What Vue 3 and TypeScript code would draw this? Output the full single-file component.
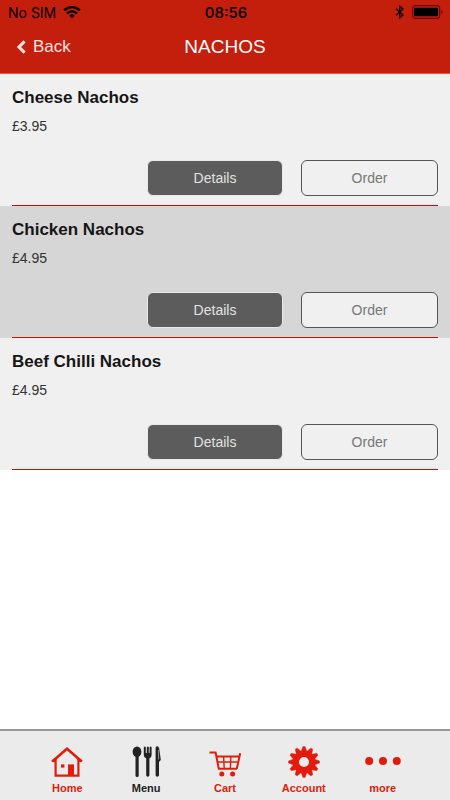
<script setup lang="ts">
interface MenuItem {
  name: string
  price: string
}

type TabIcon = 'home' | 'menu' | 'cart' | 'account' | 'more'

interface Tab {
  label: string
  icon: TabIcon
  active?: boolean
}

const items: MenuItem[] = [
  { name: 'Cheese Nachos', price: '£3.95' },
  { name: 'Chicken Nachos', price: '£4.95' },
  { name: 'Beef Chilli Nachos', price: '£4.95' },
]

const tabs: Tab[] = [
  { label: 'Home', icon: 'home' },
  { label: 'Menu', icon: 'menu', active: true },
  { label: 'Cart', icon: 'cart' },
  { label: 'Account', icon: 'account' },
  { label: 'more', icon: 'more' },
]

// Twelve-toothed gear, alternating outer and inner radius
const gearPoints: string = Array.from({ length: 48 }, (_, i) => {
  const phase = i % 4
  const step = Math.floor(i / 4)
  const radius = phase < 2 ? 15.4 : 11.4
  const offset = [-4, 4, 13, 17][phase]
  const angle = ((step * 30 + offset - 90) * Math.PI) / 180
  return `${(16 + radius * Math.cos(angle)).toFixed(2)},${(16 + radius * Math.sin(angle)).toFixed(2)}`
}).join(' ')
</script>

<template>
  <div class="screen">
    <header class="header">
      <div class="status">
        <div class="carrier">
          <span>No SIM</span>
          <svg width="18" height="14" viewBox="0 0 18 14" aria-hidden="true">
            <g fill="none" stroke="#000" stroke-width="2.4">
              <path d="M1.2 5.4C5.6 1 12.4 1 16.8 5.4" />
              <path d="M4 8.5C6.8 5.7 11.2 5.7 14 8.5" />
            </g>
            <path d="M6.2 10.4Q9 8 11.8 10.4L9 13.2Z" />
          </svg>
        </div>
        <time class="clock">08:56</time>
        <div class="power">
          <svg width="10" height="14" viewBox="0 0 10 14" aria-hidden="true">
            <path d="M1.2 3.8L8 10L4.8 12.7V1.3L8 4L1.2 10.2" fill="none" stroke="#000" stroke-width="1.3" />
          </svg>
          <svg width="32" height="14" viewBox="0 0 32 14" aria-hidden="true">
            <rect x="0.7" y="0.7" width="27" height="12.6" rx="2.5" fill="none" stroke="#680b05" stroke-width="1.2" />
            <rect x="2" y="2.8" width="24" height="8.4" rx="0.6" />
            <path d="M29.5 4.8Q32 7 29.5 9.2Z" fill="#680b05" />
          </svg>
        </div>
      </div>
      <nav class="titlebar">
        <a class="back" href="#">
          <svg width="10" height="14" viewBox="0 0 10 14" aria-hidden="true">
            <path d="M8.6 1.4L3 7L8.6 12.6" fill="none" stroke="currentColor" stroke-width="3" />
          </svg>
          <span>Back</span>
        </a>
        <h1 class="title">NACHOS</h1>
      </nav>
    </header>

    <main class="content">
      <ul class="list">
        <li v-for="item in items" :key="item.name" class="row">
          <div class="row-body">
            <h2 class="name">{{ item.name }}</h2>
            <p class="price">{{ item.price }}</p>
            <div class="actions">
              <button type="button" class="btn details">Details</button>
              <button type="button" class="btn order">Order</button>
            </div>
          </div>
        </li>
      </ul>
    </main>

    <nav class="tabbar">
      <a v-for="tab in tabs" :key="tab.label" href="#" class="tab" :class="{ active: tab.active }">
        <svg width="32" height="32" viewBox="0 0 32 32" aria-hidden="true">
          <template v-if="tab.icon === 'home'">
            <path d="M1.3 15.4L16 2.8L30.7 15.4" fill="none" stroke="currentColor" stroke-width="2.6" />
            <path d="M4.6 13V29.6H27.4V13" fill="none" stroke="currentColor" stroke-width="2.2" />
            <path d="M0.6 14.4L4.4 11.5V16H1ZM31.4 14.4L27.6 11.5V16H31Z" fill="currentColor" />
            <rect x="10" y="18.4" width="3.4" height="3.2" fill="currentColor" />
            <rect x="17" y="18.4" width="6" height="11" fill="currentColor" />
          </template>
          <template v-else-if="tab.icon === 'menu'">
            <g fill="currentColor">
              <ellipse cx="7" cy="5.8" rx="4.4" ry="5.4" />
              <rect x="5.5" y="9" width="3.2" height="22" rx="1.6" />
              <path d="M13.8 1.2Q14.8 0 15.8 1.2V7H16.8V1.2Q17.8 0 18.8 1.2V7H19.6V1.2Q20.6 0 21.6 1.2V9Q21.6 11.8 19.4 12.6V29.4Q17.8 32 16.2 29.4V12.6Q13.8 11.8 13.8 9Z" />
              <path d="M25.6 1.6Q26.4 0 28.2 0.4Q29.4 1.6 29.6 5L30.8 14L29 16V29.4Q27.2 32 25.6 29.4Z" />
            </g>
            <path d="M28.6 4V13.4" fill="none" stroke="#ebebeb" stroke-width="0.6" />
          </template>
          <template v-else-if="tab.icon === 'cart'">
            <g fill="none" stroke="currentColor">
              <path d="M0.5 6.6H6.6L9.8 22.8H28" stroke-width="2" />
              <path d="M7.4 10.6H29.6M31.2 7.2L27.8 22.8" stroke-width="2" />
              <path d="M8.2 16H28.6M14.6 10.6L15.2 22M21.8 10.6L21.4 22" stroke-width="1.4" />
            </g>
            <circle cx="12.8" cy="28" r="2.5" fill="currentColor" />
            <circle cx="23.6" cy="28" r="2.5" fill="currentColor" />
          </template>
          <template v-else-if="tab.icon === 'account'">
            <polygon :points="gearPoints" fill="currentColor" stroke="currentColor" stroke-width="0.6" stroke-linejoin="round" />
            <circle cx="16" cy="16" r="5" fill="#ebebeb" />
          </template>
          <g v-else fill="currentColor">
            <circle cx="2.2" cy="15" r="4" />
            <circle cx="16" cy="15" r="4" />
            <circle cx="29.8" cy="15" r="4" />
          </g>
        </svg>
        <span>{{ tab.label }}</span>
      </a>
    </nav>
  </div>
</template>

<style>
body {
  margin: 0;
  background: #fff;
}
</style>

<style scoped>
.screen {
  display: flex;
  flex-direction: column;
  min-height: 100vh;
  font-family: "Liberation Sans", Arial, sans-serif;
  color: #161616;
}

.header {
  background: #c41e0d;
  border-bottom: 1px solid #ef5543;
}

.status {
  display: grid;
  grid-template-columns: 1fr auto 1fr;
  align-items: center;
  height: 24px;
  padding: 0 6px 0 8px;
  font-family: Inter, "Liberation Sans", sans-serif;
  font-size: 14px;
  color: #000;
}

.carrier,
.power {
  display: flex;
  align-items: center;
  gap: 7px;
}

.power {
  justify-content: flex-end;
}

.clock {
  font-size: 15px;
  font-weight: 500;
}

.titlebar {
  display: grid;
  grid-template-columns: 1fr auto 1fr;
  align-items: center;
  height: 45px;
  padding: 0 16px 4px;
  color: #fff;
}

.back {
  display: flex;
  align-items: center;
  gap: 7px;
  font-size: 17px;
  color: #fbe3e0;
  text-decoration: none;
}

.title {
  margin: 0;
  font-size: 19px;
  font-weight: 400;
}

.content {
  flex: 1;
}

.list {
  margin: 0;
  padding: 0;
  list-style: none;
}

.row {
  padding: 0 12px;
  background: #f0f0f0;
}

.row:nth-child(even) {
  background: #d6d6d6;
}

.row-body {
  padding: 12px 0 9px;
  border-bottom: 1px solid #c4110b;
}

.name {
  margin: 0;
  font-size: 17px;
  line-height: 24px;
}

.price {
  margin: 6px 0 24px;
  font-size: 14px;
  line-height: 20px;
  color: #333;
}

.actions {
  display: grid;
  grid-template-columns: 136px 137px;
  justify-content: end;
  gap: 18px;
}

.btn {
  height: 36px;
  padding: 0;
  border-radius: 6px;
  font-family: inherit;
  font-size: 14px;
}

.details {
  border: 1px solid #e9e9e9;
  background: #5c5c5c;
  color: #e2e2e2;
}

.order {
  border: 1px solid #555;
  background: #f0f0f0;
  color: #777;
}

.tabbar {
  display: grid;
  grid-template-columns: repeat(5, 1fr);
  padding: 15px 28px 4px;
  border-top: 2px solid #999;
  background: #ebebeb;
}

.tab {
  display: flex;
  flex-direction: column;
  align-items: center;
  gap: 2px;
  font-size: 11px;
  font-weight: 700;
  line-height: 16px;
  color: #e21b0c;
  text-decoration: none;
}

.tab.active {
  color: #222;
}

.tab svg {
  overflow: visible;
}
</style>
